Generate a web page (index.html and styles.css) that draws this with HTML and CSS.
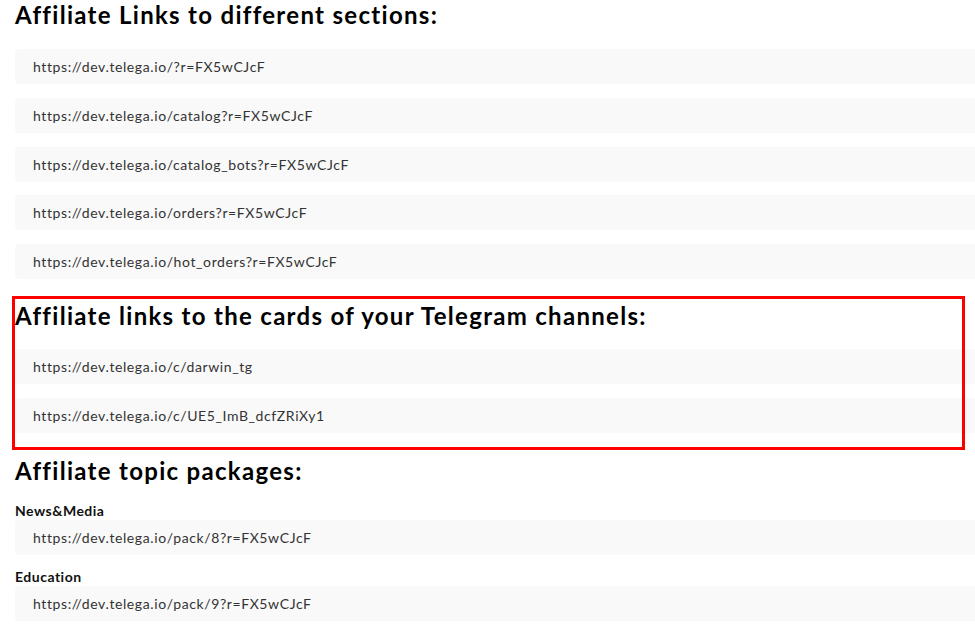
FILE: index.html
```html
<!DOCTYPE html>
<html>
<head>
<meta charset="utf-8">
<link rel="stylesheet" href="styles.css">
</head>
<body>
<div class="page">
  <h2 class="title">Affiliate Links to different sections:</h2>
  <div class="links">
    <div class="link">https://dev.telega.io/?r=FX5wCJcF</div>
    <div class="link">https://dev.telega.io/catalog?r=FX5wCJcF</div>
    <div class="link">https://dev.telega.io/catalog_bots?r=FX5wCJcF</div>
    <div class="link">https://dev.telega.io/orders?r=FX5wCJcF</div>
    <div class="link">https://dev.telega.io/hot_orders?r=FX5wCJcF</div>
  </div>
  <section class="channels">
    <h2 class="title">Affiliate links to the cards of your Telegram channels:</h2>
    <div class="links">
      <div class="link">https://dev.telega.io/c/darwin_tg</div>
      <div class="link">https://dev.telega.io/c/UE5_ImB_dcfZRiXy1</div>
    </div>
  </section>
  <section class="packages">
    <h2 class="title">Affiliate topic packages:</h2>
    <div class="pack">
      <div class="pack-name">News&amp;Media</div>
      <div class="link">https://dev.telega.io/pack/8?r=FX5wCJcF</div>
    </div>
    <div class="pack">
      <div class="pack-name">Education</div>
      <div class="link">https://dev.telega.io/pack/9?r=FX5wCJcF</div>
    </div>
  </section>
  <div class="highlight-frame"></div>
</div>
</body>
</html>
```
FILE: styles.css
```css
html, body {
  margin: 0;
  padding: 0;
  background: #ffffff;
  overflow: hidden;
}
.page {
  position: relative;
  padding: 0 0 0 15px;
  font-family: Lato, "Open Sans", sans-serif;
  color: #000;
}
.title {
  margin: 0 0 19px 0;
  font-size: 24px;
  line-height: 30px;
  font-weight: 700;
  letter-spacing: 1.3px;
  color: #000;
}
.links {
  display: flex;
  flex-direction: column;
  gap: 13.75px;
}
.link {
  box-sizing: border-box;
  width: 1000px;
  height: 35px;
  padding: 0 18px;
  display: flex;
  align-items: center;
  background: #f9f9f9;
  border-radius: 4px;
  font-size: 14px;
  letter-spacing: 0.6px;
  color: #333;
}
.channels {
  margin-top: 22px;
}
.channels .title {
  margin-bottom: 18px;
}
.packages {
  margin-top: 23px;
}
.packages .title {
  margin-bottom: 16px;
}
.pack {
  display: flex;
  flex-direction: column;
}
.pack + .pack {
  margin-top: 13px;
}
.pack-name {
  font-size: 14px;
  line-height: 18px;
  font-weight: 700;
  letter-spacing: 0.5px;
  color: #111;
}
.highlight-frame {
  position: absolute;
  left: 12px;
  top: 296px;
  width: 953px;
  height: 154px;
  box-sizing: border-box;
  border: 3px solid #ff0000;
  pointer-events: none;
}
```
